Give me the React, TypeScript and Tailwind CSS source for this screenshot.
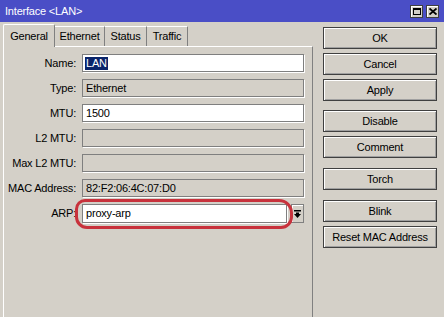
import React from "react";

const font = { fontFamily: '"Liberation Sans", Arial, sans-serif' };

const Field = ({
  label,
  value,
  editable,
  selected,
}: {
  label: string;
  value?: string;
  editable?: boolean;
  selected?: boolean;
}) => (
  <div className="flex items-center h-[18px]">
    <div className="w-[73px] text-right text-[11px] tracking-[-0.2px] text-black pr-[1px]">
      {label}
    </div>
    <div
      className={`ml-[5px] flex-1 h-[18px] border border-[#7f7f7f] shadow-[1px_1px_0_#fff] flex items-center pl-[2px] text-[11px] tracking-[-0.2px] text-black ${
        editable ? "bg-white" : "bg-[#d4d0c8]"
      }`}
    >
      {selected ? (
        <span className="bg-[#0a246a] text-white px-[1px] leading-[13px]">{value}</span>
      ) : (
        <span className="px-[1px]">{value}</span>
      )}
    </div>
  </div>
);

const Btn = ({ children, className = "" }: { children: React.ReactNode; className?: string }) => (
  <div
    className={`h-[22px] w-[114px] border border-[#404040] bg-[#d4d0c8] shadow-[inset_1px_1px_0_#fff,inset_-1px_-1px_0_#a0a0a0] flex items-center justify-center text-[11px] tracking-[-0.2px] text-black ${className}`}
  >
    {children}
  </div>
);

const App = () => {
  return (
    <div className="w-[444px] h-[317px] bg-[#d4d0c8] overflow-hidden relative" style={font}>
      {/* title bar */}
      <div className="h-[22px] bg-[#4a4ec6] flex items-center justify-between pl-[5px] pr-[5px]">
        <span className="text-white text-[11px] tracking-[-0.2px]">Interface &lt;LAN&gt;</span>
        <div className="flex gap-[3px]">
          <div className="w-[13px] h-[13px] bg-[#d4d0c8] border border-[#404040] shadow-[inset_1px_1px_0_#fff] flex items-center justify-center">
            <div className="w-[8px] h-[7px] border border-black border-t-2" />
          </div>
          <div className="w-[13px] h-[13px] bg-[#d4d0c8] border border-[#404040] shadow-[inset_1px_1px_0_#fff] flex items-center justify-center">
            <svg width="8" height="7" viewBox="0 0 8 7">
              <path d="M0.5 0.5 L7.5 6.5 M7.5 0.5 L0.5 6.5" stroke="#000" strokeWidth="1.8" />
            </svg>
          </div>
        </div>
      </div>

      <div className="flex">
        {/* left: tabs and panel */}
        <div className="ml-[3px] w-[310px]">
          <div className="h-[24px] flex items-end text-[11px] tracking-[-0.2px] text-black">
            <div className="w-[52px] border-l border-t border-white border-r border-r-[#808080] rounded-t-[2px] flex items-center justify-center relative z-10 bg-[#d4d0c8] -mb-[1px] h-[23px]">
              General
            </div>
            <div className="h-[20px] w-[50px] border-t border-white border-r border-r-[#808080] flex items-center justify-center">
              Ethernet
            </div>
            <div className="h-[20px] w-[42px] border-t border-white border-r border-r-[#808080] flex items-center justify-center">
              Status
            </div>
            <div className="h-[20px] w-[41px] border-t border-white border-r border-r-[#808080] flex items-center justify-center">
              Traffic
            </div>
          </div>
          <div className="relative h-[280px] border-l border-t border-white border-r border-r-[#808080] pt-[7px] pr-[8px] flex flex-col gap-[7px]">
            <Field label="Name:" value="LAN" editable selected />
            <Field label="Type:" value="Ethernet" />
            <Field label="MTU:" value="1500" editable />
            <Field label="L2 MTU:" />
            <Field label="Max L2 MTU:" />
            <Field label="MAC Address:" value="82:F2:06:4C:07:D0" />
            <div className="flex items-center h-[19px]">
              <div className="w-[73px] text-right text-[11px] tracking-[-0.2px] text-black pr-[1px]">ARP:</div>
              <div className="ml-[5px] flex-1 h-[19px] bg-white border border-[#7f7f7f] shadow-[1px_1px_0_#fff] flex items-center pl-[3px] text-[11px] tracking-[-0.2px] text-black">
                proxy-arp
              </div>
              <div className="ml-[4px] w-[13px] h-[19px] border border-[#808080] shadow-[inset_1px_1px_0_#fff] flex items-center justify-center">
                <svg width="7" height="8" viewBox="0 0 7 8">
                  <rect x="0" y="0" width="7" height="1.5" fill="#000" />
                  <path d="M2 2.5 H5 V4 H7 L3.5 8 L0 4 H2 Z" fill="#000" />
                </svg>
              </div>
            </div>
            {/* red hand-drawn mark */}
            <div className="absolute left-[71px] top-[152px] w-[218px] h-[30px] border-[3px] border-[#c8323c] rounded-[12px] rounded-tl-[10px] rounded-tr-[14px]" />
          </div>
        </div>

        {/* right: buttons */}
        <div className="ml-[10px] pt-[5px] flex flex-col">
          <Btn>OK</Btn>
          <Btn className="mt-[4px]">Cancel</Btn>
          <Btn className="mt-[4px]">Apply</Btn>
          <Btn className="mt-[9px]">Disable</Btn>
          <Btn className="mt-[4px]">Comment</Btn>
          <Btn className="mt-[10px]">Torch</Btn>
          <Btn className="mt-[10px]">Blink</Btn>
          <Btn className="mt-[4px]">Reset MAC Address</Btn>
        </div>
      </div>
    </div>
  );
};

export default App;
